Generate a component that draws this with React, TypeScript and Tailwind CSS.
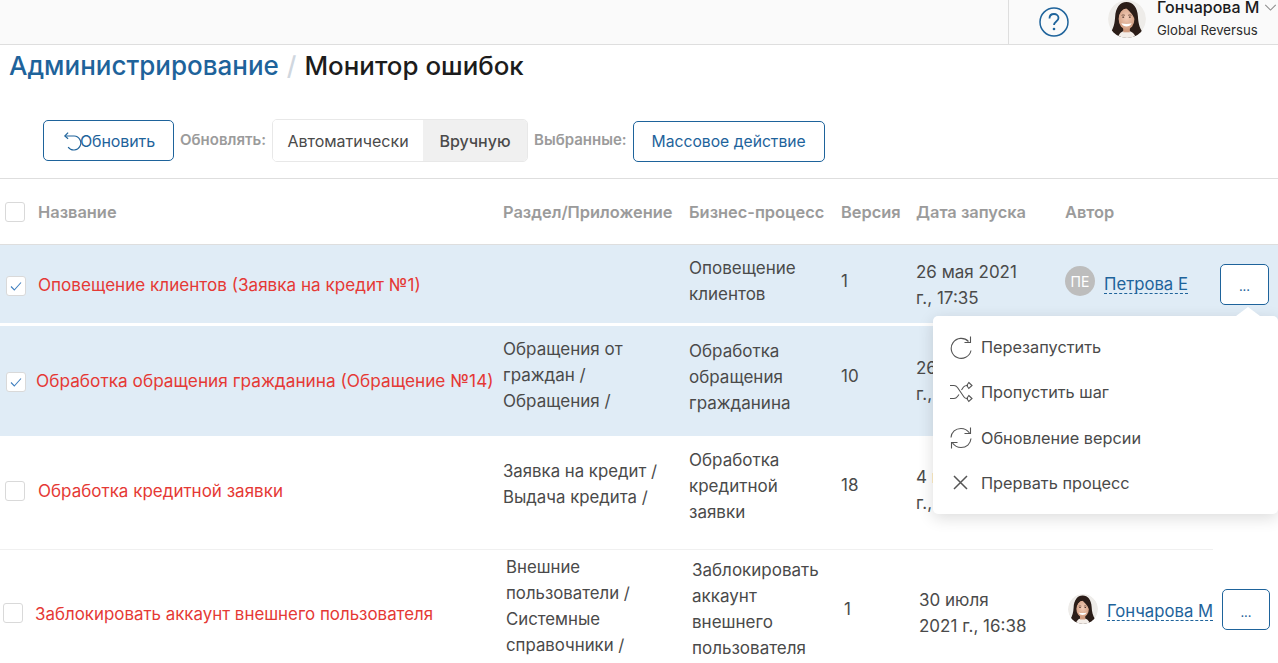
import React from "react";

function Face({ size, cls = "" }: { size: number; cls?: string }) {
  return (
    <svg width={size} height={size} viewBox="0 0 40 40" className={`shrink-0 rounded-full ${cls}`}>
      <defs>
        <radialGradient id="skin" cx="50%" cy="42%" r="62%">
          <stop offset="0%" stopColor="#f3cdb8" />
          <stop offset="100%" stopColor="#cf9a7d" />
        </radialGradient>
      </defs>
      <circle cx="20" cy="20" r="20" fill="#eeece9" />
      <path d="M3 34c3-5 4-9 4.500-16C8 8 12.500 2 19.500 2S31 8 31.500 17c.4 7 1.500 12 5 17-4 4-10.500 6-16.500 6S7 38 3 34z" fill="#2b1d18" />
      <path d="M10 40c1.500-5 5-8 9.500-8s8.500 3 10 8z" fill="#f4eee9" />
      <rect x="16" y="26" width="7" height="8" fill="#cf9a7e" />
      <ellipse cx="19.500" cy="20" rx="8.300" ry="11" fill="url(#skin)" />
      <path d="M10.500 20c.5-6 3.500-10 8-12 3 3 7 6 9.500 12 1-8-2.500-14-8.500-14S10 12 10.500 20z" fill="#2b1d18" />
      <path d="M14 24.500c2.500 4.500 8.500 4.500 11 0-3.500 1-7.500 1-11 0z" fill="#fff" />
      <path d="M14.300 16.200c1-.6 2.500-.6 3.500 0M21.200 16.200c1-.6 2.500-.6 3.500 0" stroke="#5a3b2e" strokeWidth=".8" fill="none" />
      <ellipse cx="16" cy="18" rx="1.100" ry=".7" fill="#3a241c" />
      <ellipse cx="23" cy="18" rx="1.100" ry=".7" fill="#3a241c" />
    </svg>
  );
}

function Check({ on, cls }: { on?: boolean; cls: string }) {
  return (
    <span className={`flex h-[20px] w-[20px] shrink-0 items-center justify-center rounded-[3px] border border-[#d9d9d9] bg-white ${cls}`}>
      {on && (
        <svg width="14" height="14" viewBox="0 0 14 14" fill="none" stroke="#3f7fbf" strokeWidth="1.100">
          <path d="M2 7.500 5.300 11 12 3.500" />
        </svg>
      )}
    </span>
  );
}

function Author({ name, avatar, cls = "" }: { name: string; avatar: React.ReactNode; cls?: string }) {
  return (
    <div className={`flex items-center gap-[9px] ${cls}`}>
      {avatar}
      <span className="border-b border-dashed border-[#1e639b] text-[16.700px] leading-[18px] whitespace-nowrap text-[#1e639b]">{name}</span>
    </div>
  );
}

function More({ cls }: { cls: string }) {
  return (
    <span className={`flex h-[41px] shrink-0 items-center justify-center rounded-[5px] border border-[#1e639b] bg-white pt-[5px] text-[13px] leading-none text-[#1e639b] ${cls}`}>...</span>
  );
}

function Cell({ cls, lines }: { cls: string; lines: string[] }) {
  return (
    <div className={`shrink-0 leading-[26px] whitespace-nowrap ${cls}`}>
      {lines.map((l) => (
        <div key={l}>{l}</div>
      ))}
    </div>
  );
}

const iconCls = "h-[24px] w-[24px] shrink-0";
const stroke = { fill: "none", stroke: "#555", strokeWidth: 1.1 };

const menu = [
  {
    label: "Перезапустить",
    icon: (
      <svg viewBox="0 0 24 24" className={iconCls} {...stroke}>
        <path d="M19.500 6.500A10 10 0 1 0 22 15.500" />
        <path d="M21.500 1.500V7.500H15.500" />
      </svg>
    ),
  },
  {
    label: "Пропустить шаг",
    icon: (
      <svg viewBox="0 0 24 24" className={iconCls} {...stroke}>
        <path d="M1 5.500h4c1.500 0 2.500.7 3.500 2L15 17c.8 1.200 1.500 1.500 3 1.500h1" />
        <path d="M1 18.500h4c1.500 0 2.500-.7 3.500-2l1.500-2M12.500 10l2-3c1-1.200 2-1.500 3.500-1.500h1" />
        <path d="M19.800 2.500 23 5.500 19.800 8.500 17.800 5.500zM19.800 15.500 23 18.500 19.800 21.500 17.800 18.500z" />
      </svg>
    ),
  },
  {
    label: "Обновление версии",
    icon: (
      <svg viewBox="0 0 24 24" className={iconCls} {...stroke}>
        <path d="M2 11.500C2.500 6 6.500 2.500 12 2.500c3.500 0 6.500 1.700 8.500 4.500" />
        <path d="M21.500 1.500V7.500H15.500" />
        <path d="M22 12.500c-.5 5.500-4.500 9-10 9-3.500 0-6.500-1.700-8.500-4.500" />
        <path d="M2.500 22.500V16.500H8.500" />
      </svg>
    ),
  },
  {
    label: "Прервать процесс",
    icon: (
      <svg viewBox="0 0 24 24" className={iconCls} fill="none" stroke="#555" strokeWidth="1.500">
        <path d="M5 5 18 18M18 5 5 18" />
      </svg>
    ),
  },
];

export default function App() {
  return (
    <div className="relative h-[663px] w-[1278px] overflow-hidden bg-white font-['Inter',sans-serif] text-[17px] text-[#4a4a4a]">
      <header className="flex h-[45px] justify-end border-b border-[#dedede] bg-[#fafafa]">
        <div className="flex w-[270px] items-center border-l border-[#dedede]">
          <svg width="30" height="30" viewBox="0 0 30 30" fill="none" className="ml-[30px]">
            <circle cx="15" cy="15" r="14" stroke="#1e639b" strokeWidth="1.500" />
            <path d="M10.500 11.500c0-3 2-4.500 4.500-4.500s4.500 1.600 4.500 4c0 3.500-4.500 3.500-4.500 7" stroke="#1e639b" strokeWidth="1.800" />
            <circle cx="15" cy="22" r="1.300" fill="#1e639b" />
          </svg>
          <div className="ml-[39px] self-start">
            <Face size={38} />
          </div>
          <div className="ml-[11px] flex-1 self-start">
            <div className="flex items-center whitespace-nowrap">
              <span className="text-[16px] leading-[14px] font-medium text-[#1c1c1c]">Гончарова М</span>
              <svg width="13" height="7" viewBox="0 0 14 8" fill="none" stroke="#8c8c8c" strokeWidth="1.200" className="ml-[5px] shrink-0">
                <path d="M1 1 7 7 13 1" />
              </svg>
            </div>
            <div className="mt-[8px] text-[13.200px] leading-[16px] text-[#2c2c2c]">Global Reversus</div>
          </div>
        </div>
      </header>

      <h1 className="-mt-[1px] flex h-[43px] items-center pl-[9px] text-[26px] leading-[43px] font-medium whitespace-nowrap">
        <span className="text-[#1e639b]">Администрирование</span>
        <span className="mx-[8px] text-[#d0d7df]">/</span>
        <span className="text-[25.900px] text-[#1c1c1c]">Монитор ошибок</span>
      </h1>

      <div className="mt-[32px] flex h-[43px] items-start pl-[43px] text-[16px]">
        <button className="mt-[1px] flex h-[41px] w-[131px] items-center justify-center rounded-[5px] border border-[#1e639b] text-[#1e639b]">
          <svg width="20" height="20" viewBox="0 0 18 18" fill="none" stroke="#1e639b" strokeWidth="1">
            <path d="M3.500 4.500H11a6.300 6.300 0 1 1-5.500 10" />
            <path d="M5.500 1.500 2.500 4.500 5.500 7" />
          </svg>
          <span className="-ml-[2px] tracking-[-0.1px]">Обновить</span>
        </button>
        <span className="ml-[6px] self-center text-[15px] font-semibold text-[#9b9b9b]">Обновлять:</span>
        <div className="ml-[6px] flex h-[43px] overflow-hidden rounded-[5px] border border-[#e8e8e8]">
          <span className="flex w-[150px] items-center justify-center bg-white">Автоматически</span>
          <span className="flex w-[104px] items-center justify-center bg-[#f0f0f0] font-medium">Вручную</span>
        </div>
        <span className="ml-[6px] self-center text-[15px] font-semibold text-[#9b9b9b]">Выбранные:</span>
        <button className="mt-[2px] ml-[6px] h-[41px] w-[192px] rounded-[5px] border border-[#1e639b] text-[15.700px] text-[#1e639b]">Массовое действие</button>
      </div>

      <div className="mt-[16px] flex h-[67px] items-center border-y border-[#dedede] pl-[5px] text-[16.400px] font-semibold text-[#9b9b9b]">
        <Check cls="" />
        <div className="mt-[2px] ml-[13px] w-[465px]">Название</div>
        <div className="mt-[2px] w-[186px] whitespace-nowrap">Раздел/Приложение</div>
        <div className="mt-[2px] w-[152px] whitespace-nowrap">Бизнес-процесс</div>
        <div className="mt-[2px] w-[75px]">Версия</div>
        <div className="mt-[2px] w-[149px]">Дата запуска</div>
        <div className="mt-[2px]">Автор</div>
      </div>

      <div className="flex h-[78px] items-center bg-[#e0ecf6] pl-[6px]">
        <Check on cls="mt-[4px]" />
        <div className="mt-[2px] ml-[12px] w-[465px] text-[17.100px] text-[#e53935]">Оповещение клиентов (Заявка на кредит №1)</div>
        <div className="w-[186px]" />
        <Cell cls="mb-[6px] w-[152px]" lines={["Оповещение", "клиентов"]} />
        <div className="mb-[4px] w-[75px]">1</div>
        <Cell cls="mt-[2px] w-[149px]" lines={["26 мая 2021", "г., 17:35"]} />
        <div className="w-[155px]">
          <Author
            name="Петрова Е"
            avatar={<span className="mb-[6px] flex h-[30px] w-[30px] items-center justify-center rounded-full bg-[#bdbdbd] text-[14px] text-white">ПЕ</span>}
          />
        </div>
        <More cls="w-[49px]" />
      </div>

      <div className="mt-[3px] flex h-[110px] items-center bg-[#e0ecf6] pl-[6px]">
        <Check on cls="mt-[2px]" />
        <div className="ml-[10px] w-[467px] text-[17.250px] whitespace-nowrap text-[#e53935]">Обработка обращения гражданина (Обращение №14)</div>
        <Cell cls="mb-[12px] w-[186px]" lines={["Обращения от", "граждан /", "Обращения /"]} />
        <Cell cls="mb-[8px] w-[152px]" lines={["Обработка", "обращения", "гражданина"]} />
        <div className="mb-[8px] w-[75px]">10</div>
        <Cell cls="w-[149px]" lines={["26 мая 2021", "г., 17:35"]} />
      </div>

      <div className="flex h-[114px] w-[1213px] items-center border-b border-[#f0f0f0] pl-[5px]">
        <Check cls="mb-[3px]" />
        <div className="mb-[1px] ml-[13px] w-[465px] text-[#e53935]">Обработка кредитной заявки</div>
        <Cell cls="mb-[17px] w-[186px] text-[16.800px]" lines={["Заявка на кредит /", "Выдача кредита /"]} />
        <Cell cls="mb-[13px] w-[152px]" lines={["Обработка", "кредитной", "заявки"]} />
        <div className="mb-[13px] w-[75px]">18</div>
        <Cell cls="mb-[5px] w-[149px]" lines={["4 июня 2021", "г., 10:12"]} />
      </div>

      <div className="flex h-[113px] items-center pl-[3px]">
        <Check cls="mt-[13px]" />
        <div className="mt-[17px] ml-[12px] w-[471px] text-[16.900px] whitespace-nowrap text-[#e53935]">Заблокировать аккаунт внешнего пользователя</div>
        <Cell cls="mb-[2px] w-[186px] text-[16.800px]" lines={["Внешние", "пользователи /", "Системные", "справочники /"]} />
        <Cell cls="mt-[5px] w-[152px]" lines={["Заблокировать", "аккаунт", "внешнего", "пользователя"]} />
        <div className="mt-[7px] w-[75px]">1</div>
        <Cell cls="mt-[13px] w-[149px]" lines={["30 июля", "2021 г., 16:38"]} />
        <div className="w-[154px]">
          <Author cls="mt-[10px]" name="Гончарова М" avatar={<Face size={30} cls="mb-[6px]" />} />
        </div>
        <More cls="mt-[6px] w-[48px]" />
      </div>

      <div className="absolute top-[316px] left-[933px] w-[345px] rounded-[5px] bg-white pt-[8px] pb-[8px] text-[16.300px] shadow-[0_4px_16px_rgba(0,0,0,0.14)]">
        <div className="absolute -top-[9px] left-[303px] h-0 w-0 border-x-[12px] border-b-[9px] border-x-transparent border-b-white" />
        {menu.map((m) => (
          <div key={m.label} className="flex h-[45.500px] items-center gap-[8px] pl-[16px] text-[#4a4a4a]">
            {m.icon}
            <span>{m.label}</span>
          </div>
        ))}
      </div>
    </div>
  );
}
